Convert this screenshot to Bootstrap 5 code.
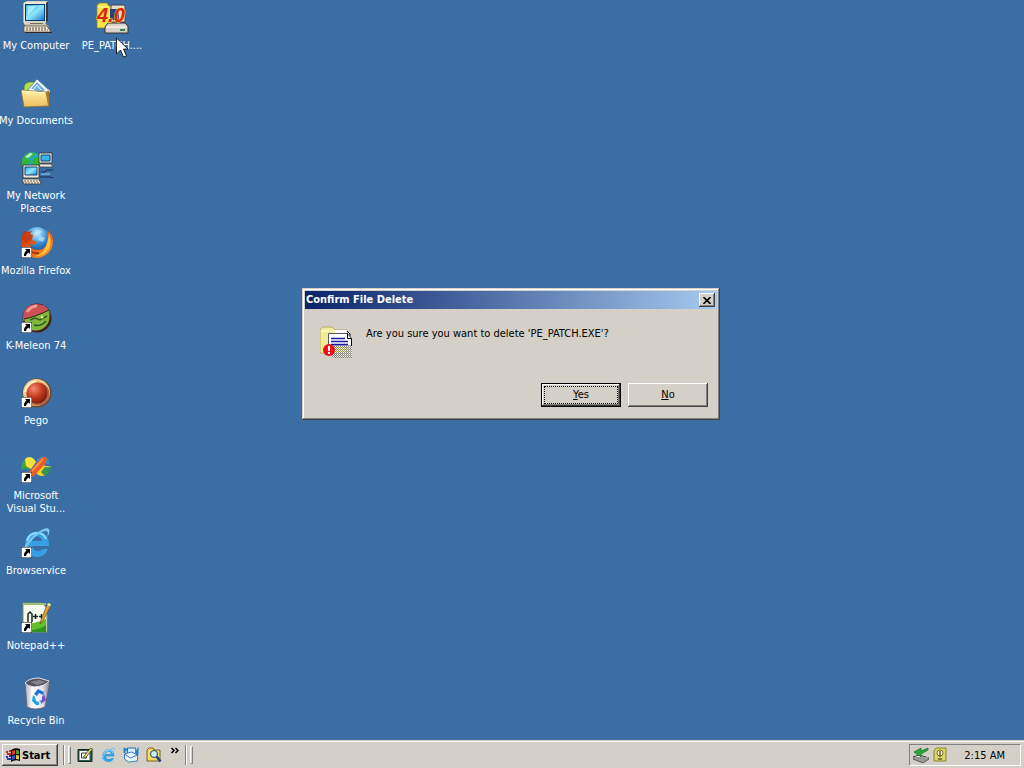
<!DOCTYPE html>
<html lang="en">
<head>
<meta charset="utf-8">
<meta name="viewport" content="width=device-width, initial-scale=1">
<title>Desktop</title>
<link href="https://cdn.jsdelivr.net/npm/bootstrap@5.3.0/dist/css/bootstrap.min.css" rel="stylesheet">
<style>
  body { background: #3a6ea5; color: #000; font: 11px/13px "DejaVu Sans Condensed", "DejaVu Sans", sans-serif; cursor: default; }
  svg { display: block; flex: none; }
  .shortcuts { display: grid; grid-auto-flow: column; grid-template-rows: repeat(9, 75px) 60px; grid-auto-columns: 72px; column-gap: 4px; justify-content: start; }
  .shortcut { padding-top: 2px; gap: 5px; color: #fff; white-space: nowrap; text-align: center; }
  .shortcut svg { overflow: visible; }
  .pointer-arrow { position: absolute; left: 116px; top: 37px; z-index: 3; }
  .dialog-layer { top: 288px; padding-right: 2px; }
  .win { width: 418px; background: #d4d0c8; padding: 3px; border: 0; box-shadow: inset -1px -1px #404040, inset 1px 1px #d4d0c8, inset -2px -2px #808080, inset 2px 2px #fff; }
  .win-title { height: 18px; padding: 0 2px 0 1px; background: linear-gradient(90deg, #0a246a, #a6caf0); }
  .win-title h1 { font-size: 11px; line-height: 18px; font-weight: bold; color: #fff; margin: 0; }
  .win-body { padding: 17px 15px 0; gap: 14px; height: 74px; }
  .win-text { padding-top: 1px; }
  .win-actions { padding: 0 9px 10px; gap: 7px; }
  .face { background: #d4d0c8; color: #000; border: 0; border-radius: 0; padding: 0; box-shadow: inset -1px -1px #404040, inset 1px 1px #fff, inset -2px -2px #808080; }
  .face-close { width: 16px; height: 14px; }
  .face-action { width: 80px; height: 24px; line-height: 24px; }
  .face-default { border: 1px solid #000; line-height: 20px; padding: 2px; }
  .face-default span { display: block; line-height: 16px; border: 1px dotted #000; }
  .taskbar { height: 28px; background: #d4d0c8; border-top: 1px solid #d4d0c8; box-shadow: inset 0 1px #fff; padding: 3px 3px 2px 2px; }
  .face-start { width: 56px; height: 22px; font-weight: bold; gap: 1px; padding: 0 3px; }
  .bands { gap: 3px; margin-left: 5px; }
  .quick-launch { gap: 7px; padding: 0 3px; }
  .groove { width: 2px; height: 20px; border-left: 1px solid #808080; border-right: 1px solid #fff; }
  .grip { width: 3px; height: 18px; border: 1px solid; border-color: #fff #808080 #808080 #fff; }
  .plain { background: none; border: 0; padding: 0; }
  .tray { width: 112px; height: 22px; padding: 0 15px 0 3px; border: 1px solid; border-color: #808080 #fff #fff #808080; }
</style>
</head>
<body class="vh-100 d-flex flex-column overflow-hidden">

<svg width="0" height="0" class="position-absolute" aria-hidden="true">
  <defs>
    <symbol id="link-arrow" viewBox="0 0 11 11"><path d="M0 0h11v11H0z" fill="#fff" stroke="#000"/><path d="M4 2h5v5L7.500 5.500Q5 7 5 9H3Q2.500 6 5.500 3.600z" fill="#000"/></symbol>
    <symbol id="ie" viewBox="0 0 32 32">
      <path d="M29 19H12q.500 5 6 5 3 0 5-2h5Q25 30 17 30 5 29 5 17 6 5 17 4.500 29 5 29 19zM12 14h10q-.800-4.500-5-4.500T12 14z" fill="#36a0e6" fill-rule="evenodd"/>
      <path d="M7 14Q9 6 17 6q7 0 9 6" fill="none" stroke="#8fdcfa" stroke-width="2"/>
      <path d="M4 27Q1 22 10 12 20 2 27 1q5 1 0 10 2-7-1-7-5 0-13 8Q4 21 6 27z" fill="#7cc6f0"/>
    </symbol>
    <linearGradient id="scr" x2="1" y2="1"><stop stop-color="#25a8e8"/><stop offset=".5" stop-color="#8ee8fb"/><stop offset="1" stop-color="#1878d0"/></linearGradient>
    <linearGradient id="fold" x2="0" y2="1"><stop stop-color="#fff3a8"/><stop offset="1" stop-color="#edbd5c"/></linearGradient>
    <linearGradient id="fox" x2="1" y2="1"><stop stop-color="#b82a0c"/><stop offset=".5" stop-color="#e86014"/><stop offset="1" stop-color="#ffa12e"/></linearGradient>
    <radialGradient id="globe" cx=".5" cy=".25" r=".8"><stop stop-color="#c5f0ff"/><stop offset=".5" stop-color="#388bd6"/><stop offset="1" stop-color="#103b86"/></radialGradient>
    <radialGradient id="red" cx=".35" cy=".3" r=".8"><stop stop-color="#f58a70"/><stop offset=".5" stop-color="#c53b20"/><stop offset="1" stop-color="#6c1408"/></radialGradient>
    <linearGradient id="bin" x2="1"><stop stop-color="#aaa8b4"/><stop offset=".3" stop-color="#fff"/><stop offset=".7" stop-color="#e4e4ee"/><stop offset="1" stop-color="#777786"/></linearGradient>
  </defs>
</svg>

<main class="flex-grow-1 position-relative">
  <div class="shortcuts">
    <div class="shortcut d-flex flex-column align-items-center">
      <svg width="32" height="32" viewBox="0 0 32 32"><path d="M4 1L7-1H28v20l-3 3H4z" fill="#d8d4c4"/><path d="M26 1l2-2v20l-2 2z" fill="#3a372f"/><path d="M4 21V1h22" fill="none" stroke="#fffbe9"/><path d="M5 2h20v17H5z" fill="#0a3d72"/><path d="M6 3h18v15H6z" fill="url(#scr)"/><path d="M7 4h9L8 14z" fill="#d8fbff" opacity=".6"/><path d="M10 21h13v3H10z" fill="#746d5e"/><path d="M4 22h22l3 3H6z" fill="#c9c3b1"/><path d="M4 24h23l4 6H4z" fill="#e9e2d1" stroke="#5b493b" stroke-width=".700"/><path d="M6 26h20M6 28h22" stroke="#685343" stroke-dasharray="2 1"/><path d="M5 30.500h27" stroke="#302820"/></svg>
      <span>My Computer</span>
    </div>
    <div class="shortcut d-flex flex-column align-items-center">
      <svg width="32" height="32" viewBox="0 0 32 32"><path d="M4 11q0-5 5-6h6l2 5v8H4z" fill="#b3df58" stroke="#5b7b24" stroke-width=".700"/><path d="M7 14L17 2l13 12-4 10-14-2z" fill="#f4fbff" stroke="#346891" stroke-width=".700"/><path d="M11 12l6-7 8 8-4 3z" fill="#6eb0e5"/><path d="M13 13l4-5 4 5m2 2l4-2M10 15l3-3" stroke="#fff" fill="none"/><path d="M28 12l2 2-3 4z" fill="#fff"/><path d="M1 13l25 2 3 14-25 1z" fill="url(#fold)" stroke="#916f25" stroke-width=".800"/><path d="M2 14l23 2" stroke="#fffbd0"/><path d="M26 15l3-2v14l-1 2z" fill="#a8792c"/></svg>
      <span>My Documents</span>
    </div>
    <div class="shortcut d-flex flex-column align-items-center">
      <svg width="32" height="32" viewBox="0 0 32 32"><circle cx="12" cy="10" r="10" fill="#25a6c7"/><path d="M2 13Q1 3 11 0l5 2-4 3-5 1 4 3-6 5zm11-6l5-3 3 7-4 5-5-4z" fill="#34b72d"/><path d="M5 5l5-4 3 1-5 4z" fill="#bff0d8"/><path d="M19 1h13v10H19z" fill="#eee7d6" stroke="#292c33" stroke-width=".800"/><path d="M21 3h9v6h-9z" fill="#35b2ef" stroke="#174778"/><path d="M19 12h12l2 3H20z" fill="#efe9da" stroke="#343434" stroke-width=".700"/><path d="M3 13h16v13H3z" fill="#eee7d6" stroke="#292c33" stroke-width=".800"/><path d="M5 15h12v8H5z" fill="url(#scr)" stroke="#174778"/><path d="M2 27h17l2 5H4z" fill="#f1eadb" stroke="#343434" stroke-width=".700"/><path d="M4 29h15M5 31h15" stroke="#665544" stroke-dasharray="2 1"/><path d="M21 20h4l2-2h6M20 25h10l3 1" stroke="#172c51" fill="none"/><path d="M21 22h9" stroke="#9bd5fb"/></svg>
      <span>My Network<br>Places</span>
    </div>
    <div class="shortcut d-flex flex-column align-items-center">
      <svg width="32" height="32" viewBox="0 0 32 32"><circle cx="17" cy="13" r="13" fill="url(#globe)"/><path d="M16 3l6 1-3 4-5-1zM20 9l5 2-2 4-5-2z" fill="#bde8ff" opacity=".7"/><path d="M4 4Q-2 15 4 24q6 8 15 7 14-4 14-17 0-7-6-11 2 8 0 13-2 7-9 7-7 0-8-6l4 1 3-3-5-2 1-5-3-1 2-3-4 1z" fill="url(#fox)"/><path d="M29 6q5 14-5 21-5 3-9 2 12-2 14-23z" fill="#ffc33a"/><path d="M2 11l8-3 2 2-1 3-5 3z" fill="#c63e10"/><path d="M5 20q5 7 14 6" stroke="#b3330c" stroke-width="2" fill="none"/><use href="#link-arrow" x="1" y="20" width="11" height="11"/></svg>
      <span>Mozilla Firefox</span>
    </div>
    <div class="shortcut d-flex flex-column align-items-center">
      <svg width="32" height="32" viewBox="0 0 32 32"><circle cx="17" cy="16" r="14.500" fill="#452021"/><path d="M3 16Q3 3 16 2q9 0 13 6L17 14 3 19z" fill="#cc5056"/><path d="M7 10q4-6 10-6" stroke="#f49b93" stroke-width="3" fill="none"/><path d="M4 17l10-3q7-2 15-6 2 11-3 16-6 6-14 4-6-4-8-11z" fill="#82b83e"/><path d="M10 18l5-2 5 2 7-4M14 23q7 2 12-4" stroke="#315d22" fill="none" stroke-width="1.500"/><path d="M4 17q11-2 25-9" stroke="#301e17" fill="none"/><circle cx="22" cy="15" r="1.500" fill="#d9ec7d"/><use href="#link-arrow" x="1" y="20" width="11" height="11"/></svg>
      <span>K-Meleon 74</span>
    </div>
    <div class="shortcut d-flex flex-column align-items-center">
      <svg width="32" height="32" viewBox="0 0 32 32"><circle cx="17" cy="16" r="14.500" fill="#764326"/><circle cx="16.500" cy="15.500" r="13.500" fill="#f0c891"/><circle cx="18" cy="17" r="11.500" fill="#ae6441"/><circle cx="17" cy="16" r="10.500" fill="url(#red)"/><path d="M5 15Q7 6 16 4" stroke="#fff0c1" stroke-width="2" fill="none"/><use href="#link-arrow" x="1" y="20" width="11" height="11"/></svg>
      <span>Pego</span>
    </div>
    <div class="shortcut d-flex flex-column align-items-center">
      <svg width="32" height="32" viewBox="0 0 32 32"><path d="M1 18Q1 8 8 5l6 5-5 8q-3-3-8 0z" fill="#40a348"/><path d="M5 7q6-5 11 3l-5 7-5-3z" fill="#f4e33b"/><path d="M18 16l4-4q3 3 9 2-2 10-10 10-5-1-6-5z" fill="#f3cf2c"/><path d="M25 15q4 1 6-1-1 7-6 10l-4-4z" fill="#2e9850"/><path d="M17 8q4-5 9-3 4 3 3 8-4-3-8-1l-4 4z" fill="#2f91d4"/><path d="M9 20l13-15q4-1 5 3l-2 4-12 13z" fill="#ed5b21"/><path d="M12 19L23 7" stroke="#ff8d4c" stroke-width="2"/><use href="#link-arrow" x="1" y="20" width="11" height="11"/></svg>
      <span>Microsoft<br>Visual Stu...</span>
    </div>
    <div class="shortcut d-flex flex-column align-items-center">
      <svg width="32" height="32" viewBox="0 0 32 32"><use href="#ie" width="32" height="32"/><use href="#link-arrow" x="1" y="20" width="11" height="11"/></svg>
      <span>Browservice</span>
    </div>
    <div class="shortcut d-flex flex-column align-items-center">
      <svg width="32" height="32" viewBox="0 0 32 32"><path d="M3 1h19l5 5v24H3z" fill="#f5faed" stroke="#78905e"/><path d="M3 2h23" stroke="#9bbf78" stroke-width="2"/><path d="M4 22q10 0 22-5v13H4z" fill="#63bf2e"/><path d="M12 28q9-1 14-5v7H12z" fill="#32931c"/><path d="M8 20v-8l2-2 2 2v8M13 14.500h5M15.500 12v5M19 14.500h5M21.500 12v5" stroke="#17251b" stroke-width="1.500" fill="none"/><path d="M21 18L27 3l3 2-7 14-3 3z" fill="#eba33a" stroke="#684712" stroke-width=".700"/><path d="M27 3l1-2 3 1-1 3z" fill="#e6ec85"/><use href="#link-arrow" x="1" y="20" width="11" height="11"/></svg>
      <span>Notepad++</span>
    </div>
    <div class="shortcut d-flex flex-column align-items-center">
      <svg width="32" height="32" viewBox="0 0 32 32"><path d="M5 6l2 24q8 4 18 0l5-25z" fill="url(#bin)" stroke="#62606d" stroke-width=".800"/><path d="M5 6q4-5 14-5l10 3q-3 5-15 6-7-1-9-4z" fill="#55545d" stroke="#e7e7ee"/><path d="M10 5l9-2 7 2-9 3z" fill="#858490"/><path d="M14 17l4-5 6 3-1 3-4-2-2 3z" fill="#2672d2"/><path d="M24 17l2 6-5 4v-2l-2-1 3-1v-3z" fill="#6e55ce"/><path d="M13 18l-1 6 4 4h3v-3l-3-1-1-4z" fill="#1ba7db"/></svg>
      <span>Recycle Bin</span>
    </div>
    <div class="shortcut d-flex flex-column align-items-center">
      <svg width="32" height="32" viewBox="0 0 32 32"><path d="M1 3l3-2h7l2 3h11v22H1z" fill="#f4e34e" stroke="#967b25" stroke-width=".700"/><path d="M2 5h10" stroke="#fffbc0"/><path d="M15 3h14v17H15z" fill="#e3ddd0" stroke="#434043"/><path d="M14 7h9v11h-9z" fill="#263f89"/><path d="M9 25l3-4h17l3 3v7H9z" fill="#d8d1c7" stroke="#34302d"/><path d="M10 25h20" stroke="#fff"/><path d="M24 28h5" stroke="#37823f" stroke-width="2"/><text x="1" y="20" font-family="Liberation Sans" font-size="20" font-style="italic" font-weight="bold" fill="#dc2116" stroke="#ffe22c" stroke-width="1" paint-order="stroke">4.0</text></svg>
      <span>PE_PATCH....</span>
    </div>
  </div>

  <svg class="pointer-arrow" width="13" height="21" viewBox="0 0 13 21"><path d="M.500 1v16l4-4 3 7 3-1-3-7H12z" fill="#fff" stroke="#000" stroke-width=".800"/></svg>

  <div class="dialog-layer position-absolute start-0 end-0 d-flex justify-content-center">
    <section class="win" role="dialog" aria-labelledby="dialog-title" aria-describedby="dialog-text">
      <header class="win-title d-flex align-items-center justify-content-between">
        <h1 id="dialog-title">Confirm File Delete</h1>
        <button type="button" class="face face-close d-flex align-items-center justify-content-center" aria-label="Close"><svg width="8" height="7" viewBox="0 0 8 7"><path d="M.500 0l7 7m0-7l-7 7" stroke="#000" stroke-width="1.600"/></svg></button>
      </header>
      <div class="win-body d-flex align-items-start">
        <svg width="32" height="32" viewBox="0 0 32 32">
          <defs><pattern id="shred" width="2" height="2" patternUnits="userSpaceOnUse"><path d="M0 0h1v1H0zM1 1h1v1H1z" fill="#868686"/><path d="M1 0h1v1H1z" fill="#fff"/></pattern></defs>
          <path d="M0 4l3-3h9l3 3h12v23H0z" fill="#f2ec94" stroke="#a69f55" stroke-width=".800"/><path d="M1 5h14" stroke="#fffde0"/><path d="M15 4h12v4H15z" fill="#fff"/><path d="M27 5l3 3v4" stroke="#000" fill="none"/><path d="M8.500 7.500h19l4 5V20h-23z" fill="#fff" stroke="#55566c"/><path d="M27.500 7.500v5h4V20" fill="none" stroke="#000"/><path d="M11 12.500h14M11 15.500h17M11 18.500h17" stroke="#1d1da8" stroke-width="1.500"/><path d="M9 20h23v12H14l-4-3z" fill="url(#shred)"/><circle cx="9" cy="24" r="6" fill="#ed1118"/><path d="M9 20v5M9 26v2" stroke="#fff" stroke-width="2"/>
        </svg>
        <p id="dialog-text" class="win-text mb-0">Are you sure you want to delete 'PE_PATCH.EXE'?</p>
      </div>
      <footer class="win-actions d-flex justify-content-end">
        <button type="button" class="face face-action face-default"><span><u>Y</u>es</span></button>
        <button type="button" class="face face-action"><u>N</u>o</button>
      </footer>
    </section>
  </div>
</main>

<footer class="taskbar d-flex align-items-center">
  <button type="button" class="face face-start d-flex align-items-center">
    <svg width="16" height="16" viewBox="0 0 16 16"><path d="M6 3q4-3 9-1v12q-5-2-9 1z" fill="#000"/><path d="M7 4q2-1 3-1v4L7 8z" fill="#e33b22"/><path d="M11 3q2 0 3 .500v4L11 7z" fill="#38a536"/><path d="M7 9l3-1v4l-3 1z" fill="#3159d0"/><path d="M11 8l3 .500v4L11 12z" fill="#edca25"/><path d="M1 5h2M4 4h2M2 7h4" stroke="#c32c37" stroke-width="2"/><path d="M1 10h2M4 9h2M2 12h4" stroke="#2a3eb0" stroke-width="2"/></svg>
    <span>Start</span>
  </button>
  <div class="bands d-flex align-items-center me-auto">
    <span class="groove"></span>
    <span class="grip"></span>
    <nav class="quick-launch d-flex align-items-center" aria-label="Quick launch">
      <button type="button" class="plain" aria-label="Show desktop"><svg width="16" height="16" viewBox="0 0 15 16"><path d="M.500 2.500h14v12H.500z" fill="#315b50" stroke="#152922"/><path d="M2 4h10v9H2z" fill="#fff"/><path d="M4 6h5v5H4z" fill="#fff" stroke="#284438"/><path d="M6 10l7-9 2 1-7 9z" fill="#eee064" stroke="#222" stroke-width=".700"/></svg></button>
      <button type="button" class="plain" aria-label="Internet Explorer"><svg width="16" height="16"><use href="#ie" width="16" height="16"/></svg></button>
      <button type="button" class="plain" aria-label="Mail"><svg width="16" height="16" viewBox="0 0 15 16"><path d="M4 1h8l1 8H4z" fill="#d5eaff" stroke="#36679f"/><path d="M1 7l7-2 6 3v6l-9 1-4-3z" fill="#e7f5ff" stroke="#407bb9"/><path d="M1 7l6 4 7-3" stroke="#407bb9" fill="none"/><path d="M1 6V2l3 1m8 3l2-3v5" stroke="#2383ce" stroke-width="2" fill="none"/></svg></button>
      <button type="button" class="plain" aria-label="Find files"><svg width="16" height="16" viewBox="0 0 16 16"><path d="M1 3l2-2h4l1 2h6v11H1z" fill="#f6da62" stroke="#74621d"/><circle cx="8" cy="7" r="3.500" fill="#c6f4ff" stroke="#253e53"/><path d="M10.500 9.500l4 5" stroke="#1e3c88" stroke-width="2.500"/></svg></button>
      <button type="button" class="plain align-self-start" aria-label="More"><svg width="10" height="8" viewBox="0 0 10 8"><path d="M2.500 1L5 3.500 2.500 6M6.500 1L9 3.500 6.500 6" fill="none" stroke="#000" stroke-width="1.500"/></svg></button>
    </nav>
    <span class="groove"></span>
    <span class="grip"></span>
  </div>
  <div class="tray d-flex align-items-center">
    <svg width="16" height="16" viewBox="0 0 16 16"><path d="M0 10l6-2 10 3-6 4z" fill="#f4f1e5" stroke="#303530"/><path d="M0 10v2l10 4 6-4v-2" fill="#999" stroke="#333" stroke-width=".700"/><path d="M15 1L8 4V1L1 5l7 5V7l7-4z" fill="#29a83c" stroke="#14682a" stroke-width=".700"/></svg>
    <svg class="ms-1" width="14" height="16" viewBox="0 0 14 16"><path d="M3 1h10v13H1V4z" fill="#d9d467" stroke="#8a852d"/><circle cx="7" cy="6" r="3" fill="#fffce1" stroke="#777024"/><path d="M7 4v6M5 12h4" stroke="#655d20" stroke-width="1.500"/></svg>
    <time class="ms-auto" datetime="02:15">2:15 AM</time>
  </div>
</footer>

<script src="https://cdn.jsdelivr.net/npm/bootstrap@5.3.0/dist/js/bootstrap.bundle.min.js"></script>
</body>
</html>
